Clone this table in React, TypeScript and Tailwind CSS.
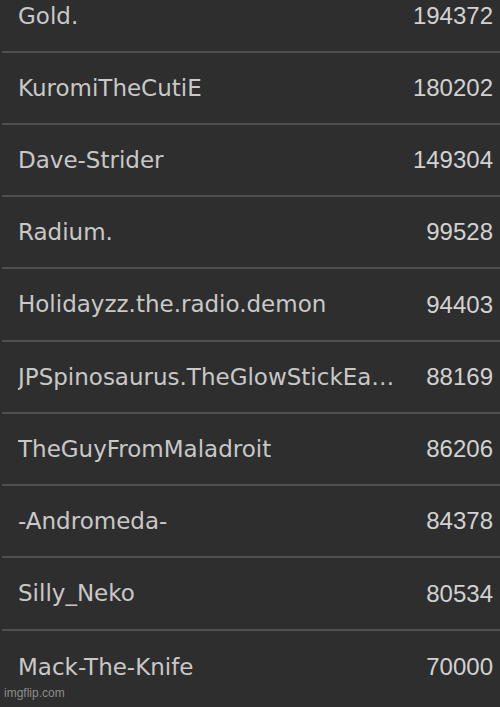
const rows: { name: string; score: number; h: string }[] = [
  { name: "Gold.", score: 194372, h: "h-[72px]" },
  { name: "KuromiTheCutiE", score: 180202, h: "h-[72px]" },
  { name: "Dave-Strider", score: 149304, h: "h-[72px]" },
  { name: "Radium.", score: 99528, h: "h-[72px]" },
  { name: "Holidayzz.the.radio.demon", score: 94403, h: "h-[73px]" },
  { name: "JPSpinosaurus.TheGlowStickEa…", score: 88169, h: "h-[72px]" },
  { name: "TheGuyFromMaladroit", score: 86206, h: "h-[72px]" },
  { name: "-Andromeda-", score: 84378, h: "h-[72px]" },
  { name: "Silly_Neko", score: 80534, h: "h-[73px]" },
  { name: "Mack-The-Knife", score: 70000, h: "h-[72px]" },
];

export default function App() {
  return (
    <div className="relative h-[707px] w-[500px] overflow-hidden bg-[#2e2e2e]">
      {/* leaderboard list, first row is cut off at the top */}
      <div className="-mt-[19px] ml-[2px]">
        {rows.map((r, i) => (
          <div
            key={r.name}
            className={`flex ${r.h} items-center justify-between pl-4 pr-[7px] ${
              i < rows.length - 1 ? "border-b-2 border-[#4f4f4f]" : ""
            }`}
          >
            <span className="truncate font-['DejaVu_Sans',sans-serif] text-[23px] text-[#c8c8c8]">
              {r.name}
            </span>
            <span className="font-['Liberation_Sans',Arial,sans-serif] text-[24px] text-[#d2d2d2]">
              {r.score}
            </span>
          </div>
        ))}
      </div>

      {/* watermark */}
      <span className="absolute bottom-[5px] left-[4px] font-['Liberation_Sans',Arial,sans-serif] text-[12px] text-[#8c8c8c]">
        imgflip.com
      </span>
    </div>
  );
}
